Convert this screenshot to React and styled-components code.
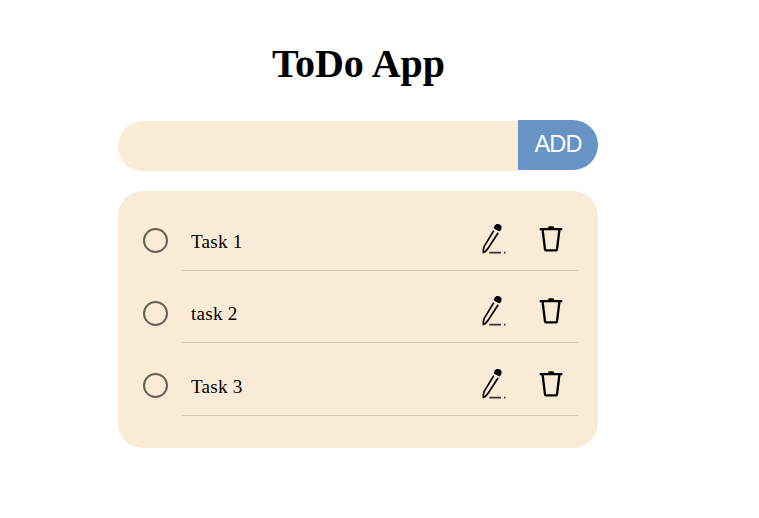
import React, { useState } from "react";
import styled, { createGlobalStyle } from "styled-components";

const GlobalStyle = createGlobalStyle`
  * { box-sizing: border-box; }
  body { margin: 0; background: #fff; color: #000; font-family: "Liberation Serif", "Times New Roman", serif; }
`;

const Page = styled.main`
  width: 480px;
  margin-left: 118px;
  padding-top: 41px;
`;

const Title = styled.h1`
  margin: 0 0 33px;
  padding-left: 1px;
  font-size: 40px;
  line-height: 46px;
  text-align: center;
`;

const AddForm = styled.form`
  display: flex;
  height: 51px;
  margin-bottom: 20px;
`;

const TaskInput = styled.input`
  width: 400px;
  height: 50px;
  margin: 1px 0 0;
  padding: 0 20px;
  border: 0;
  outline: 0;
  border-radius: 25px 0 0 25px;
  background: #faebd7;
  font: 20px "Liberation Serif", serif;
`;

const AddButton = styled.button`
  width: 80px;
  height: 50px;
  padding: 0 0 1px;
  border: 0;
  border-radius: 0 25px 25px 0;
  background: #6793c5;
  color: #fff;
  font: 23.5px "Liberation Sans", Arial, sans-serif;
  letter-spacing: -0.9px;
`;

const List = styled.ul`
  height: 257px;
  margin: 0;
  padding: 19.5px 20px 0 25px;
  border-radius: 25px;
  background: #faebd7;
  list-style: none;
`;

const Row = styled.li`
  display: flex;
  height: 72.4px;
`;

const Check = styled.button`
  flex: none;
  width: 25px;
  height: 25px;
  margin: 17.8px 14px 0 0;
  padding: 0;
  border: 2px solid #665f58;
  border-radius: 50%;
  background: ${(p) => (p.$done ? "#665f58" : "transparent")};
`;

const Content = styled.div`
  display: flex;
  flex: 1;
  height: 60.5px;
  border-bottom: 1px solid #d5c8b8;
`;

const Label = styled.span`
  flex: 1;
  padding: 19.4px 0 0 9px;
  font-size: 19.2px;
  line-height: 23px;
  letter-spacing: 0.2px;
`;

const IconButton = styled.button`
  width: 40px;
  height: 40px;
  margin: 7.5px ${(p) => p.$gap}px 0 0;
  padding: 0;
  border: 0;
  background: none;
  svg { display: block; }
`;

const PenIcon = () => (
  <svg width="40" height="40" viewBox="0 0 40 40" fill="none" stroke="#000" strokeWidth="1.7" strokeLinejoin="round">
    <path d="M18.8 12.6 9.2 28.4Q8 31.4 8.3 34.5 11.2 33.3 13.1 30.2L23.2 14.8" />
    <path d="M19.1 10.7C18.5 7.6 20.7 5.9 22.9 6 26.4 6.2 27.2 9 26.2 11.2L24.6 13.6Z" fill="#000" stroke="none" />
    <path d="M14.3 34.6H26M29 34.6H30.5" stroke="#37332f" />
  </svg>
);

const TrashIcon = () => (
  <svg width="40" height="40" viewBox="0 0 40 40" fill="none" stroke="#000" strokeWidth="2.3" strokeLinejoin="round">
    <path d="M7.7 11.1H30.3M10.5 11 13 31.4Q13.1 32.4 14.1 32.4H24Q24.9 32.4 25 31.4L27.5 11" />
    <path d="M15.8 10.3Q16 8.2 17.5 8.2H20.6Q22.1 8.2 22.3 10.3Z" fill="#000" stroke="none" />
  </svg>
);

const initialTasks = ["Task 1", "task 2", "Task 3"].map((text, id) => ({ id, text, done: false }));

export default function App() {
  const [tasks, setTasks] = useState(initialTasks);
  const [draft, setDraft] = useState("");

  const addTask = (event) => {
    event.preventDefault();
    if (!draft.trim()) return;
    setTasks([...tasks, { id: Date.now(), text: draft.trim(), done: false }]);
    setDraft("");
  };
  const toggle = (id) => setTasks(tasks.map((t) => (t.id === id ? { ...t, done: !t.done } : t)));
  const remove = (id) => setTasks(tasks.filter((t) => t.id !== id));

  return (
    <>
      <GlobalStyle />
      <Page>
        <Title>ToDo App</Title>
        <AddForm onSubmit={addTask}>
          <TaskInput value={draft} onChange={(e) => setDraft(e.target.value)} />
          <AddButton>ADD</AddButton>
        </AddForm>
        <List>
          {tasks.map((task) => (
            <Row key={task.id}>
              <Check $done={task.done} onClick={() => toggle(task.id)} />
              <Content>
                <Label>{task.text}</Label>
                <IconButton $gap={17}><PenIcon /></IconButton>
                <IconButton $gap={6} onClick={() => remove(task.id)}><TrashIcon /></IconButton>
              </Content>
            </Row>
          ))}
        </List>
      </Page>
    </>
  );
}
